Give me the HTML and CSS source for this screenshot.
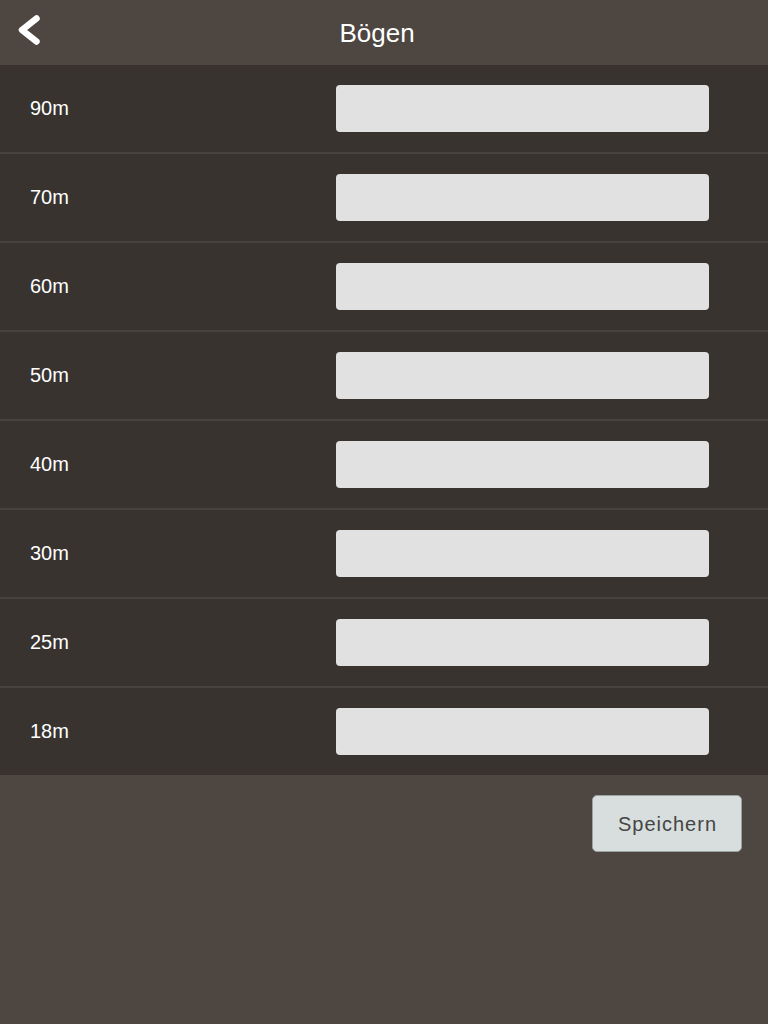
FILE: index.html
```html
<!DOCTYPE html>
<html lang="de">
<head>
<meta charset="utf-8">
<title>Bögen</title>
<link rel="stylesheet" href="styles.css">
</head>
<body>
<header class="topbar">
  <button class="back" aria-label="Zurück">
    <svg width="30" height="36" viewBox="0 0 30 36"><path d="M22.5 6.5 L8 18 L22.5 29.5" fill="none" stroke="#fff" stroke-width="6.5" stroke-linecap="round" stroke-linejoin="round"/></svg>
  </button>
  <h1 class="title">Bögen</h1>
</header>
<main class="list">
  <div class="row"><span class="label">90m</span><input class="field" type="text"></div>
  <div class="row"><span class="label">70m</span><input class="field" type="text"></div>
  <div class="row"><span class="label">60m</span><input class="field" type="text"></div>
  <div class="row"><span class="label">50m</span><input class="field" type="text"></div>
  <div class="row"><span class="label">40m</span><input class="field" type="text"></div>
  <div class="row"><span class="label">30m</span><input class="field" type="text"></div>
  <div class="row"><span class="label">25m</span><input class="field" type="text"></div>
  <div class="row"><span class="label">18m</span><input class="field" type="text"></div>
</main>
<div class="actions">
  <button class="save">Speichern</button>
</div>
</body>
</html>
```
FILE: styles.css
```css
html, body {
  margin: 0;
  padding: 0;
  background: #4d4641;
  font-family: "Liberation Sans", Arial, sans-serif;
  height: 100%;
}
.topbar {
  height: 65px;
  background: #4d4641;
  position: relative;
  display: flex;
  align-items: center;
  justify-content: center;
}
.back {
  position: absolute;
  left: 14px;
  top: 12px;
  width: 30px;
  height: 36px;
  padding: 0;
  border: 0;
  background: transparent;
  display: block;
}
.back svg {
  display: block;
}
.title {
  margin: 0;
  padding-right: 14px;
  color: #fff;
  font-size: 26px;
  font-weight: normal;
  line-height: 1;
}
.list {
  display: flex;
  flex-direction: column;
  gap: 2px;
  background-color: #48423d;
}
.row {
  height: 87px;
  background: #38332f;
  display: flex;
  align-items: center;
  padding-left: 30px;
  box-sizing: border-box;
}
.label {
  width: 306px;
  color: #fff;
  font-size: 20px;
  line-height: 1;
  margin-bottom: 2px;
}
.field {
  width: 373px;
  height: 47px;
  box-sizing: border-box;
  border: 0;
  border-radius: 4px;
  background: #e1e1e1;
  margin: 0;
  padding: 0;
}
.actions {
  display: flex;
  justify-content: flex-end;
  padding: 20px 26px 0 0;
}
.save {
  width: 150px;
  height: 57px;
  box-sizing: border-box;
  border: 1px solid #99a3a2;
  border-radius: 5px;
  background: #d8dedd;
  color: #454545;
  font-family: "Liberation Sans", Arial, sans-serif;
  font-size: 20px;
  letter-spacing: 1px;
  padding: 2px 0 0 1px;
}
```
